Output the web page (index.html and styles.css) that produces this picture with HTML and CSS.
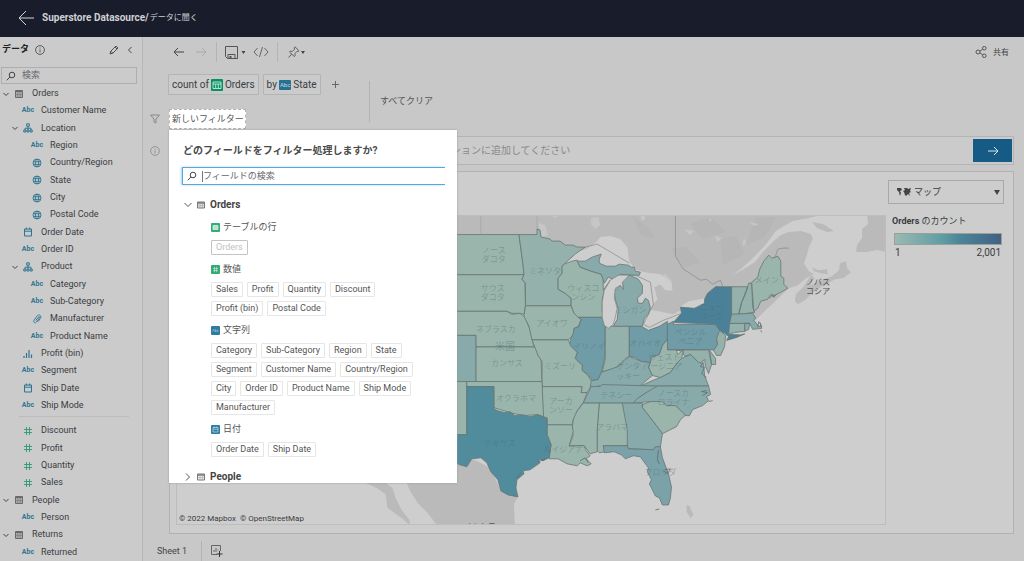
FILE: index.html
```html
<!DOCTYPE html>
<html lang="ja">
<head>
<meta charset="utf-8">
<meta name="viewport" content="width=device-width, initial-scale=1">
<title>データに聞く</title>
<link rel="stylesheet" href="styles.css">
</head>
<body>
<svg class="sprite" aria-hidden="true">
  <symbol id="table" viewBox="0 0 10 10"><path d="M1.500 1.500h7v7h-7z" fill="#aaa" stroke="#6a6a6a"/><path d="M1.500 2.500h7" stroke="#6a6a6a"/><path d="M3.800 3v5.500M6.200 3v5.500M1.500 5.500h7" stroke="#777" stroke-width=".6"/></symbol>
  <symbol id="hier" viewBox="0 0 10 10"><path d="M3.7.8h2.6v2.4H3.7zM.8 7h2.2v2H.8zM4 7h2v2H4zM7.2 7h2v2h-2zM5 3.2V7M2 7V5.2h6V7" fill="none" stroke="#2f7491"/></symbol>
  <symbol id="globe" viewBox="0 0 10 10"><path d="M1 5a4 4 0 1 0 8 0a4 4 0 1 0-8 0M1.3 3.7h7.4M1.3 6.4h7.4M5 1C2.8 3 2.8 7 5 9C7.2 7 7.2 3 5 1" fill="none" stroke="#2f7491" stroke-width=".9"/></symbol>
  <symbol id="date" viewBox="0 0 10 10"><path d="M1.5 2h7v7h-7zM1.5 4.2h7M3.3.5v2M6.7.5v2" fill="none" stroke="#2f7491"/></symbol>
  <symbol id="clip" viewBox="0 0 10 10"><path d="M3.800 6.500L6.300 3.200C7.200 2.300 8 3 7.400 4L4.500 8C3 9.700.8 8.300 2 6.300L5 2C6.800-.1 9.800 1.400 8.600 4L6 7.700" fill="none" stroke="#2f7491" stroke-width=".9"/></symbol>
  <symbol id="bars" viewBox="0 0 10 10"><path d="M1 9V7M3.500 9V4M6 9V1M8.500 9V5.500" stroke="#2f7491" stroke-width="1.2"/></symbol>
  <symbol id="hash" viewBox="0 0 10 10"><path d="M3.500 1v8M6.500 1v8M1 3.500h8M1 6.500h8" stroke="#2f9a6c" stroke-width=".9"/></symbol>
  <symbol id="down" viewBox="0 0 8 8"><path d="M1.500 3L4 5.500 6.500 3" fill="none" stroke="#444"/></symbol>
  <symbol id="search" viewBox="0 0 10 10"><path d="M3.200 4a2.800 2.800 0 1 0 5.600 0a2.800 2.800 0 1 0-5.600 0M4 6L.7 9.300" fill="none" stroke="#444"/></symbol>
  <symbol id="info" viewBox="0 0 10 10"><path d="M.6 5a4.400 4.400 0 1 0 8.800 0a4.400 4.400 0 1 0-8.800 0M5 4.300V7.500M5 2.500v1" fill="none" stroke="currentColor" stroke-width=".8"/></symbol>
  <symbol id="right" viewBox="0 0 12 10"><path d="M1 5h10M7 1l4 4-4 4" fill="none" stroke="currentColor"/></symbol>
  <symbol id="left" viewBox="0 0 12 10"><path d="M11 5H1M5 1L1 5l4 4" fill="none" stroke="currentColor"/></symbol>
</svg>

<header class="topbar">
  <button class="plain back" aria-label="戻る"><svg width="16" height="16" viewBox="0 0 16 16"><path d="M16 8H1M8 1L1 8l7 7" fill="none" stroke="#d5d6d9"/></svg></button>
  <h1><a href="#ds">Superstore Datasource/</a> <span>データに聞く</span></h1>
</header>

<div class="workspace">
  <aside class="sidebar">
    <div class="side-head">
      <h2>データ</h2>
      <svg class="i10 info" aria-hidden="true"><use href="#info"/></svg>
      <button class="plain edit" aria-label="編集"><svg width="10" height="10" viewBox="0 0 10 10"><path d="M1 9l.8-2.800L7 1l2 2-5.200 5.200zM6 2l2 2M1.800 6.200l2 2" fill="none" stroke="#444" stroke-width=".9"/></svg></button>
      <button class="plain" aria-label="閉じる"><svg width="6" height="8" viewBox="0 0 6 8"><path d="M4.500 1L1.500 4l3 3" fill="none" stroke="#444"/></svg></button>
    </div>
    <label class="side-search"><svg class="i10"><use href="#search"/></svg><input type="text" placeholder="検索" aria-label="検索"></label>
    <ul class="tree">
      <li class="l0"><svg class="tw"><use href="#down"/></svg><svg class="i10"><use href="#table"/></svg><span>Orders</span></li>
      <li class="l1"><i></i><b>Abc</b><span>Customer Name</span></li>
      <li class="l1"><svg class="tw"><use href="#down"/></svg><svg class="i10"><use href="#hier"/></svg><span>Location</span></li>
      <li class="l2"><i></i><b>Abc</b><span>Region</span></li>
      <li class="l2"><i></i><svg class="i10"><use href="#globe"/></svg><span>Country/Region</span></li>
      <li class="l2"><i></i><svg class="i10"><use href="#globe"/></svg><span>State</span></li>
      <li class="l2"><i></i><svg class="i10"><use href="#globe"/></svg><span>City</span></li>
      <li class="l2"><i></i><svg class="i10"><use href="#globe"/></svg><span>Postal Code</span></li>
      <li class="l1"><i></i><svg class="i10"><use href="#date"/></svg><span>Order Date</span></li>
      <li class="l1"><i></i><b>Abc</b><span>Order ID</span></li>
      <li class="l1"><svg class="tw"><use href="#down"/></svg><svg class="i10"><use href="#hier"/></svg><span>Product</span></li>
      <li class="l2"><i></i><b>Abc</b><span>Category</span></li>
      <li class="l2"><i></i><b>Abc</b><span>Sub-Category</span></li>
      <li class="l2"><i></i><svg class="i10"><use href="#clip"/></svg><span>Manufacturer</span></li>
      <li class="l2"><i></i><b>Abc</b><span>Product Name</span></li>
      <li class="l1"><i></i><svg class="i10"><use href="#bars"/></svg><span>Profit (bin)</span></li>
      <li class="l1"><i></i><b>Abc</b><span>Segment</span></li>
      <li class="l1"><i></i><svg class="i10"><use href="#date"/></svg><span>Ship Date</span></li>
      <li class="l1"><i></i><b>Abc</b><span>Ship Mode</span></li>
      <li class="rule" role="separator"></li>
      <li class="l1"><i></i><svg class="i10"><use href="#hash"/></svg><span>Discount</span></li>
      <li class="l1"><i></i><svg class="i10"><use href="#hash"/></svg><span>Profit</span></li>
      <li class="l1"><i></i><svg class="i10"><use href="#hash"/></svg><span>Quantity</span></li>
      <li class="l1"><i></i><svg class="i10"><use href="#hash"/></svg><span>Sales</span></li>
      <li class="l0"><svg class="tw"><use href="#down"/></svg><svg class="i10"><use href="#table"/></svg><span>People</span></li>
      <li class="l1"><i></i><b>Abc</b><span>Person</span></li>
      <li class="l0"><svg class="tw"><use href="#down"/></svg><svg class="i10"><use href="#table"/></svg><span>Returns</span></li>
      <li class="l1"><i></i><b>Abc</b><span>Returned</span></li>
    </ul>
  </aside>

  <main class="main">
    <div class="toolbar">
      <button class="plain" aria-label="元に戻す"><svg width="12" height="10"><use href="#left"/></svg></button>
      <button class="plain faded" aria-label="やり直し"><svg width="12" height="10"><use href="#right"/></svg></button>
      <span class="vr"></span>
      <button class="plain save" aria-label="保存"><svg width="20" height="13" viewBox="0 0 20 13"><path d="M.5.5h12v12H2.500l-2-2zM3 12.500V8.500h7v4" fill="none" stroke="#555"/><path d="M4.500 10h2v2.500h-2z" fill="#555"/><path d="M16.500 5h4l-2 3z" fill="#444"/></svg></button>
      <button class="plain code" aria-label="コード"><svg width="16" height="10" viewBox="0 0 16 10"><path d="M4.500 1L1 5l3.500 4M11.500 1L15 5l-3.500 4M9.500 0l-3 10" fill="none" stroke="#666"/></svg></button>
      <span class="vr"></span>
      <button class="plain pin" aria-label="ピン留め"><svg width="17" height="12" viewBox="0 0 17 12"><path d="M7 .8l4 4-.8.600-1.200-.1L7 7.500l.1 2.200-.8.800L1.500 6l.8-.8 2.200.1L6.500 3.300 6.300 1.700zM3.800 8L.5 11.500" fill="none" stroke="#555" stroke-width=".9"/><path d="M13 5h4l-2 3z" fill="#444"/></svg></button>
      <button class="plain share"><svg width="12" height="12" viewBox="0 0 12 12"><path d="M1 6a2 2 0 1 0 4 0a2 2 0 1 0-4 0M7.500 2.200a1.800 1.800 0 1 0 3.600 0a1.800 1.800 0 1 0-3.600 0M7.500 9.800a1.800 1.800 0 1 0 3.600 0a1.800 1.800 0 1 0-3.600 0M5 5l2.700-1.700M5 7l2.700 1.700" fill="none" stroke="#555"/></svg>共有</button>
    </div>

    <section class="query">
      <div class="phrases">
        <div class="pill-row">
          <button class="pill">count of <svg width="12" height="12" viewBox="0 0 12 12"><rect width="12" height="12" rx="1" fill="#079163"/><path d="M2 3h8v6.500H2zM2 5h8M4.700 5v4.500M7.300 5v4.500" fill="none" stroke="#cde8dd" stroke-width=".9"/></svg> Orders</button>
          <button class="pill">by <span class="abc-tag">Abc</span> State</button>
          <button class="plain plus" aria-label="追加"><svg width="7" height="7" viewBox="0 0 7 7"><path d="M0 3.500h7M3.500 0v7" stroke="#666"/></svg></button>
        </div>
        <div class="filter-row">
          <svg class="funnel" width="10" height="10" viewBox="0 0 10 10"><path d="M.5 1h9L6 5v4L4 8V5z" fill="none" stroke="#888"/></svg>
          <div class="filter-anchor">
            <button class="new-filter">新しいフィルター</button>
            <div class="popup" role="dialog" aria-labelledby="ptitle">
              <h2 id="ptitle">どのフィールドをフィルター処理しますか?</h2>
              <label class="field-search"><svg class="i10"><use href="#search"/></svg><span class="caret"></span><input type="text" placeholder="フィールドの検索" aria-label="フィールドの検索"></label>
              <h3><svg class="chev" viewBox="0 0 8 8"><path d="M.5 2L4 5.500 7.500 2" fill="none" stroke="#555"/></svg><svg class="tbl" viewBox="0 0 8 8"><path d="M.5 1h7v6h-7z" fill="#ddd" stroke="#777"/><path d="M.5 2h7" stroke="#777" stroke-width="1.5"/><path d="M.5 4.500h7M3 2v5M5.500 2v5" stroke="#aaa" stroke-width=".6"/></svg>Orders</h3>
              <div class="group">
                <h4><svg viewBox="0 0 9 9"><rect width="9" height="9" rx="1" fill="#36aa77"/><path d="M2 2.500h5v4H2z" fill="#b9e3d0" stroke="#dff3ea" stroke-width=".7"/></svg>テーブルの行</h4>
                <div class="chips"><button disabled>Orders</button></div>
                <h4><svg viewBox="0 0 9 9"><rect width="9" height="9" rx="1" fill="#36aa77"/><path d="M3.500 2v5M5.500 2v5M2 3.500h5M2 5.500h5" stroke="#cdebdd" stroke-width=".6"/></svg>数値</h4>
                <div class="chips"><button>Sales</button><button>Profit</button><button>Quantity</button><button>Discount</button><button>Profit (bin)</button><button>Postal Code</button></div>
                <h4><svg viewBox="0 0 9 9"><rect width="9" height="9" rx="1" fill="#2d7ca1"/><path d="M1.500 5.500l1-2 1 2M4.200 3v2.500h1V4.200h-1M7.500 4.200H6.200v1.300h1.300" fill="none" stroke="#b5d3e0" stroke-width=".5"/></svg>文字列</h4>
                <div class="chips"><button>Category</button><button>Sub-Category</button><button>Region</button><button>State</button><button>Segment</button><button>Customer Name</button><button>Country/Region</button><button>City</button><button>Order ID</button><button>Product Name</button><button>Ship Mode</button><button>Manufacturer</button></div>
                <h4><svg viewBox="0 0 9 9"><rect width="9" height="9" rx="1" fill="#2d7ca1"/><path d="M2 2.500h5v4.500H2zM2 4.200h5M3.200 1.500v1M5.800 1.500v1" fill="none" stroke="#c5dde7" stroke-width=".7"/></svg>日付</h4>
                <div class="chips"><button>Order Date</button><button>Ship Date</button></div>
              </div>
              <h3><svg class="chev" viewBox="0 0 8 8"><path d="M2 .5L5.500 4 2 7.500" fill="none" stroke="#555"/></svg><svg class="tbl" viewBox="0 0 8 8"><path d="M.5 1h7v6h-7z" fill="#eee" stroke="#777"/><path d="M.5 2h7" stroke="#777" stroke-width="1.500"/><path d="M.5 4.500h7M3 2v5M5.500 2v5" stroke="#aaa" stroke-width=".6"/></svg>People</h3>
            </div>
          </div>
        </div>
      </div>
      <button class="plain clear">すべてクリア</button>
    </section>

    <div class="ask-row">
      <svg class="i10 ask-info"><use href="#info"/></svg>
      <div class="ask">
        <input type="text" aria-label="質問" placeholder="フィールドまたは値を検索して、データのビジュアライゼーションに追加してください">
        <button aria-label="実行"><svg width="12" height="10"><use href="#right"/></svg></button>
      </div>
    </div>

    <section class="viz">
      <div class="map">
        <svg class="map-svg" viewBox="177 217 708 307" preserveAspectRatio="xMidYMid slice" role="img" aria-label="Orders のカウント マップ">
          <g fill="#bababa">
            <path d="M400 216H820L808 219L792 222L783 227L775 232L770 239L763 248L754 257L740 270L731 276L741 271L754 263L763 252L772 243L780 236L788 233L800 232L810 235L812 240L808 248L806 256L803 264L808 272L813 275L805 279L797 286L788 289L745 330L600 300L580 250L537 240H400z"/>
            <path d="M810 276L814 279L807 287L816 283L823 280L831 277L838 271L839 264L845 262L846 269L850 273L842 279L834 280L823 286L812 293L804 301L797 305L794 302L795 295L803 287z"/>
            <path d="M811 223L822 225L833 232L826 233L816 229zM811 268L817 271L826 270L827 275L820 274L813 272zM866 216H886V253L876 251L866 253L855 253L856 246L861 239L861 230L867 225z"/>
            <path d="M457 463L472 459L490 468L500 488L518 497L514 504L515 525H437L428 513L418 503L410 490L407 483H440zM366 483H386L393 488L396 498L402 510L410 520V525L402 518L388 508L386 494L377 488zM686 505L689 506L693 515L690 518L686 512z"/>
          </g>
          <g fill="#adadad" opacity=".3">
            <path d="M632 217L640 235L655 240L647 228zM690 225L710 218L725 233L702 240zM755 219L775 218L764 238L745 246z"/>
            <path d="M670 250L685 248L700 263L684 268zM720 240L735 237L744 255L722 266z"/>
          </g>
          <g fill="#c6c6c6">
            <path d="M538 224L545 226L548 236L542 238zM551 216L560 216L555 219zM591 219L598 218L600 226L595 230L591 226zM684 230L694 232L689 236zM714 237L721 239L717 243zM748 223L758 225L754 227zM664 274L671 281L670 292L664 289L658 284z"/>
            <path d="M640 216h4l1 4-4 2zM742 242l3-2 0 5-3 2zM709 219l2 1-2 4z"/>
          </g>
          <path d="M481 217V235M537 217V231" stroke="#a4a4a4" stroke-width=".7"/>
          <g fill="#cecece">
            <path d="M564 265L574 255L588 249L597 242L600 238L610 237L620 240L627 248L629 262L635 270L644 273L660 275L671 283L672 291L665 291L660 285L654 288L657 300L652 306L648 318L640 321L600 300L590 265z"/>
            <path d="M642 327L650 323L659 319L670 317L680 311L681 314L674 322L662 327L652 332L645 331zM680 307L688 302L699 300L705 299L703 305L693 309z"/>
          </g>
          <g class="states">
            <path d="M400 235.500H519L521 250L523 265L524 275.500H400z"/>
            <path d="M400 275.500H524L522 280L525 284L525.500 306L524 315L520 314L512 314L507 312H400z"/>
            <path d="M400 312H507L512 315L520 314L525 318L530 330L534 347.500H476V336H400z"/>
            <path d="M476 347.500H534L539 352L538 356L541 360L542 382H476z"/>
            <path class="b" d="M400 336H476V382H400z"/>
            <path d="M400 382H467V435H400z"/>
            <path class="a" d="M519 235.500H537V230L540 231L541 238L550 240L552 242L560 242L565 246L573 246L577 248L585 248L575 255L564 265L562 267L562 274L558 279V290L565 294L571 299V306.500H525.500V284L522 280L524 275.500L523 265z"/>
            <path d="M525.500 306.500H571L574 314L581 320L578 327L574 329L573 336L568 340.500H532L529 327L524 317z"/>
            <path d="M564 265L572 262L577 261L580 268L591 272L601 275L603 280L603 291L610 281L604 292L602 300L602 312L604 318H578L574 314L571 306V299L565 294L558 290V279L562 274V267z"/>
            <path class="b" d="M577 262L585 262L592 258L601 255L599 260L599 264L606 267L615 267L619 265L628 266L631 268L634 268L635 272L640 273L639 276H630L620 275L613 280L608 278L604 284L601 275L591 272L580 268z"/>
            <path class="b" d="M629 276L638 280L642 286L642 294L637 299L638 304L642 304L645 299L648 301L650 309L648 315L644 319L642 327H613L617 320L618 310L615 300L614 292L620 286L623 290L622 282z"/>
            <path class="c" d="M578 318H604L605 327V355L603 365L601 373L598 380L592 381L588 375L582 371L582 365L575 359L577 353L570 346L570 341L573 334L574 329L579 327L581 320z"/>
            <path class="a" d="M605 327H629V357L624 360L619 366L612 370L602 372L605 360z"/>
            <path class="c" d="M629 327H641L648 331L659 327L667 322V340L662 346L659 355L651 358L650 363L641 362L635 358L629 357z"/>
            <path class="c" d="M667 325L673 322L673 325H715L719 331L723 333L716 339L717 345L714 350.500H667z"/>
            <path class="ny" d="M673 323L681 314L680 308L694 309L704 304L704 300L707 294L715 287.500H731V315L729 324V335L740 335.500L744 334.500L736 338L726 341L728 337L723 333L719 331L715 325z"/>
            <path class="a" d="M731 287.500H747L745 294L741 303L738 315H731zM747 287.500L748 284L751 284L752 308L754 313L738 315L741 303zM729 324H744V332L734 333L728 335z"/>
            <path d="M751 283L757 278L759 270L763 262L768 256L771 259L777 257L780 262V277L783 279V285L787 289L780 293L772 297L770 295L767 300L760 302L757 309L753 312z"/>
            <path class="b" d="M731 315L752 314L755 319L753 321L758 327L761 327L759 323L761 329L752 330L749 324H729zM744 324H749L748 330L744 332z"/>
            <path class="a" d="M719 331L725 336L724 347L720 356L716 356L713 351L717 345L716 339zM676 350.500H708L711 365L708 374L705 367L704 360L699 364L690 355L684 357L682 352zM709 351L715 359L715 365H711z"/>
            <path d="M667 340V350.500H676L677 355L683 350.500L681 359L677 363L670 373L660 378L652 376L648 368L650 363L651 358L659 355L662 346z"/>
            <path class="b" d="M640 386.500L652 381L660 378L670 373L677 363L681 359L690 355L698 363L703 364L704 376L708 386.500z"/>
            <path class="b" d="M601 373L618 367L629 357L641 362L650 363L648 368L652 376L640 386L600 386L591 388L588 382L598 380z"/>
            <path class="b" d="M591 387H600L602 385L657 386.500L655 390L646 393L637 399L633 403.500H583z"/>
            <path class="b" d="M657 386.500H708L710 395L706 397L708 401L702 406L692 410L689 416H685L675 406H666L662 403L650 402L633 403.500L637 399L646 393z"/>
            <path d="M642 405L650 402L662 402L666 406H675L685 415.500L680 420L676 427L668 431L662 434L653 422L642 408z"/>
            <path class="b" d="M622 403.500H642V408L653 422L662 434L660 447L654 448V450L628 449L627 446L625 430z"/>
            <path d="M599 403.500H622L625 420L627 430V446H603L605 452L599 453L597 451L597 430z"/>
            <path d="M583 403.500H599L597 430V452L590 454L584 446H569L573 436L572 428L574 415L578 410z"/>
            <path class="c2" d="M603 446H627L628 449L653 450L655 447L660 447L662 458L668 474L671 487L670 498L668 505H662L659 498L655 496L649 484L651 480L647 472L648 468L640 457L633 456L625 459L621 455L614 452L604 453z"/>
            <path d="M547 425H572L573 432L569 446H584L586 451L590 456L586 459L591 464L587 466L580 463L577 466L567 464L558 459L549 459L551 445L547 435z"/>
            <path d="M542 387H582L581 393L587 393L583 403L577 411L573 420L572 425H547V418L543 417z"/>
            <path d="M532 340.500H568L571 347L577 353L575 359L582 366L582 371L588 376L591 382L590 388L587 393H581L582 387H542V362L538 356z"/>
            <path d="M467 382H542L543.500 417L537 415L523 416L510 413L494 408V387H467z"/>
            <path class="tx" d="M467 387H494V409L498 411L505 413L510 412L515 416L522 415L530 417L538 415L547 419V435L551 445L549 458L543 461L538 459L540 463L530 470L523 471L524 474L517 480L516 488L518 497L508 495L501 491L498 480L491 472L487 463L481 458L472 459L467 467L460 465L450 460L440 435H467z"/>
          </g>
          <g fill="#cecece" stroke="#777" stroke-width=".6">
            <path d="M629 276L618 276L610 281L604 291L602 303V318L604 326L608 329L613 325L615 318L617 309L614 299L615 289L620 286L623 290L622 283z"/>
          </g>
          <path d="M585 248L597 245L629 264M630 275L637 277L650 283L653 305L643 325L649 328L663 321L681 314M675 217V257L683 270L700 281L706 280L712 285L720 281L722 287M774 259L777 250L783 249L788 249" fill="none" stroke="#888" stroke-width=".7"/>
          <path d="M538 462l7-3M517 478l4-5M580 461l5-3 3 5M658 450l-1 10 2 4M664 470l6-1-3 5-4-3M706 391l-5 1 6 1-5 3M708 402l4-1M703 362l-3 5 4 1-3 6 5 4M769 299l3-4 1 3 3-3M757 328l1-6M761 333l-1-2M655 510l4-1" fill="none" stroke="#606b6b" stroke-width=".8"/>
          <g class="map-labels">
            <text x="494" y="254">ノース</text><text x="494" y="263">ダコタ</text><text x="493" y="292">サウス</text><text x="493" y="301">ダコタ</text><text x="545" y="275">ミネソタ</text><text x="583" y="292">ウィスコ</text><text x="583" y="301">ンシン</text><text x="630" y="314">ミシガン</text><text x="552" y="327">アイオワ</text><text x="496" y="333">ネブラスカ</text><text class="big" x="505" y="351">米国</text><text x="507" y="367">カンサス</text><text x="560" y="370">ミズーリ</text><text x="589" y="350">イリノイ</text><text x="645" y="347">オハイオ</text><text x="516" y="401">オクラホマ</text><text x="561" y="404">アーカ</text><text x="561" y="413">ンソー</text><text x="500" y="446">テキサス</text><text x="563" y="452">ルイジアナ</text><text x="612" y="430">アラバマ</text><text x="616" y="398">テネシー</text><text x="628" y="370">ケンタ</text><text x="628" y="379">ッキー</text><text x="664" y="361">ウェスト</text><text x="662" y="370">バージニア</text><text x="673" y="396">ノースカ</text><text x="673" y="405">ロライナ</text><text x="660" y="475">フロリダ</text><text x="690" y="336">ペンシル</text><text x="690" y="345">ベニア</text><text x="711" y="311">ニュー</text><text x="711" y="320">ヨーク</text><text x="766" y="284">メイン</text>
            <text class="dark" x="817" y="286">ノバス</text><text class="dark" x="817" y="295">コシア</text><text class="dark" x="480" y="529">メキシコ</text>
          </g>
        </svg>
        <p class="credits"><a href="#mapbox">© 2022 Mapbox</a><a href="#osm">© OpenStreetMap</a></p>
      </div>
      <div class="viz-side">
        <div class="select-wrap">
          <svg width="14" height="10" viewBox="0 0 14 10"><path d="M0 1h4l1 2-2 1 1 2-1 3-1-4L0 3zM7 1h3l1 1 3-1-1 3 1 1-2 1 1 3-2-2-2 2-1-1-1-3-1-1 2-1z" fill="#444"/></svg>
          <select aria-label="Viz タイプ"><option>マップ</option></select>
          <svg class="arrow" width="6" height="5" viewBox="0 0 6 5"><path d="M0 0h6L3 5z" fill="#444"/></svg>
        </div>
        <h2><b>Orders</b> のカウント</h2>
        <div class="ramp"></div>
        <div class="range"><span>1</span><span>2,001</span></div>
      </div>
    </section>

    <footer class="tabs">
      <button class="plain tab">Sheet 1</button>
      <button class="plain add" aria-label="シートを追加"><svg width="12" height="12" viewBox="0 0 12 12"><path d="M6 9.500H.5V.5h9V6M3 7V5M5 7V3M7 5.500V4.500" fill="none" stroke="#666"/><path d="M8.500 6v6M5.500 9h6" stroke="#333"/></svg></button>
    </footer>
  </main>
</div>
</body>
</html>
```
FILE: styles.css
```css
* { box-sizing: border-box; }
body {
  margin: 0;
  min-height: 100vh;
  display: flex;
  flex-direction: column;
  background: #c8c8c8;
  color: #3a3c3f;
  font: 9px/15px Roboto, "Noto Sans CJK JP", sans-serif;
}
h1, h2, h3, h4, p, ul { margin: 0; padding: 0; font-size: inherit; font-weight: inherit; }
svg { display: block; flex: none; }
button, input, select { font: inherit; color: inherit; margin: 0; }
button { padding: 0; cursor: pointer; }
input { min-width: 0; padding: 0; border: 0; outline: 0; background: transparent; }
a { color: inherit; text-decoration: none; }
.sprite { position: absolute; width: 0; height: 0; }
.i10 { width: 10px; height: 10px; }
.plain { display: flex; align-items: center; border: 0; background: none; color: #444; }

.topbar {
  display: flex;
  align-items: center;
  gap: 8px;
  height: 37px;
  padding: 0 18px 2px;
  background: #191d2b;
  color: #d0d1d4;
}
.topbar h1 { display: flex; gap: 1px; font-size: 8px; }
.topbar h1 a { font-weight: 700; font-size: 10px; }

.workspace { flex: 1; display: flex; min-height: 0; }

.sidebar {
  flex: none;
  width: 143px;
  display: flex;
  flex-direction: column;
  background: #cbcbcb;
  border-right: 1px solid #b8b8b8;
}
.side-head { display: flex; align-items: center; height: 25px; padding: 0 9px 0 2px; }
.side-head h2 { font-weight: 700; color: #222; }
.side-head .info { margin-left: 6px; }
.side-head .edit { margin: 0 8px 0 auto; }
.side-search {
  display: flex;
  align-items: center;
  gap: 6px;
  height: 17px;
  margin: 5px 5px 0 1px;
  padding: 0 4px;
  border: 1px solid #aeaeae;
}
.side-search input { flex: 1; }
input::placeholder { color: #66686b; opacity: 1; }
.tree { flex: 1; display: flex; flex-direction: column; list-style: none; margin-top: 1px; }
.tree li { flex: 1 1 17px; display: flex; align-items: center; line-height: 17px; white-space: nowrap; }
.tree .tw, .tree i { flex: none; width: 8px; height: 8px; margin-right: 4px; }
.tree .l0 { padding-left: 2px; }
.tree .l1 { padding-left: 11px; }
.tree .l2 { padding-left: 20px; }
.tree span { margin-left: 8px; }
.tree b { width: 14px; margin: 0 -2px; font-size: 7px; text-align: center; color: #2f7491; }
.tree .rule { flex: none; height: 6px; margin: 2px 13px 0 19px; border-top: 1px solid #bcbcbc; }

.main { flex: 1; min-width: 0; display: flex; flex-direction: column; }
.toolbar { display: flex; align-items: center; gap: 10px; height: 30px; padding: 0 15px 0 30px; }
.toolbar .faded { margin-right: -1px; color: #a9a9a9; }
.toolbar .vr { width: 1px; height: 20px; background: #b4b4b4; }
.toolbar .save { margin-left: -2px; }
.toolbar .code { margin: 0 -2px 0 -2px; }
.toolbar .share { margin-left: auto; gap: 6px; font-size: 8px; }

.query { display: flex; align-items: center; padding-top: 7px; }
.phrases { width: 226px; }
.pill-row { display: flex; gap: 4px; padding-left: 25px; }
.pill {
  display: flex;
  align-items: center;
  gap: 2px;
  height: 21px;
  padding: 0 3px;
  border: 1px solid #b4b4b4;
  border-radius: 1px;
  background: #cbcbcb;
  font-size: 10px;
  white-space: nowrap;
}
.abc-tag { padding: 0 1px; line-height: 10px; border-radius: 1px; background: #27708f; color: #c4d9e2; font-size: 6px; }
.plus { margin-left: 7px; }
.filter-row { display: flex; align-items: center; gap: 9px; margin-top: 14px; padding-left: 7px; }
.filter-anchor { position: relative; }
.new-filter {
  display: block;
  height: 20px;
  padding: 0 1px 0 2px;
  border: 1px dashed #b4b4b4;
  background: #fff;
  color: #555;
}
.clear { height: 41px; padding-left: 10px; border-left: 1px solid #b2b2b2; color: #555; }

.popup {
  position: absolute;
  z-index: 2;
  top: 21px;
  left: 0;
  width: 288px;
  height: 353px;
  padding: 12px 12px 0 13px;
  overflow: hidden;
  background: #fff;
  box-shadow: 0 0 2px #999;
  color: #555;
}
.popup h2 { line-height: 17px; margin-left: 1px; font-size: 10px; font-weight: 700; color: #4a4a4a; }
.field-search {
  display: flex;
  align-items: center;
  height: 18px;
  margin: 8px 0 12px;
  padding-left: 4px;
  border: 1px solid #55a8e2;
  border-right: 0;
  box-shadow: -1px 0 2px #a8d4f2;
}
.caret { width: 1px; height: 11px; margin-left: 5px; background: #777; }
.field-search input { flex: 1; }
.popup h3 { display: flex; align-items: center; height: 15px; margin: 0 0 8px 2px; font-size: 10px; font-weight: 700; color: #444; }
.popup h3 svg { width: 8px; height: 8px; }
.popup h3 .tbl { margin: 0 5px; }
.group { padding-left: 29px; margin-bottom: 12px; }
.group h4 { display: flex; align-items: center; gap: 3px; height: 15px; margin-bottom: 5px; }
.group h4 svg { width: 9px; height: 9px; }
.chips { display: flex; flex-wrap: wrap; gap: 4px; margin-bottom: 7px; max-width: 212px; }
.chips button { height: 15px; padding: 0 4px; border: 1px solid #e6e6e6; border-radius: 1px; background: #fff; line-height: 13px; }
.chips button:disabled { border-color: #c4c4c4; color: #c2c2c2; }

.ask-row { display: flex; align-items: center; gap: 9px; margin-top: 7px; padding: 0 10px 0 7px; }
.ask-info { color: #888; }
.ask { flex: 1; display: flex; height: 29px; padding: 2px 1px 2px 13px; border: 1px solid #b4b4b4; background: #cbcbcb; font-size: 10px; }
.ask input { flex: 1; }
.ask input::placeholder { color: #8a8a8a; }
.ask button { display: flex; align-items: center; justify-content: center; width: 39px; border: 0; background: #165a86; color: #dce6ed; }

.viz {
  flex: 1;
  display: grid;
  grid-template-columns: minmax(0, 1fr) 118px;
  margin: 6px 10px 0 26px;
  padding: 8px 9px 8px 6px;
  border: 1px solid #b2b2b2;
  background: #cdcdcd;
}
.map { position: relative; margin-top: 35px; border: 1px solid #bdbdbd; background: #cecece; overflow: hidden; }
.map-svg { position: absolute; inset: 0; width: 100%; height: 100%; }
.states path { fill: #9ab5ac; stroke: #687573; stroke-width: 0.8; stroke-linejoin: round; }
.states .a { fill: #94b1ab; }
.states .b { fill: #88aaab; }
.states .c { fill: #6f9ca6; }
.states .c2 { fill: #7aa2a8; }
.states .tx { fill: #508c9c; }
.states .ny { fill: #4a8199; }
.map-labels { font-size: 8px; text-anchor: middle; fill: #4c6a6c; fill-opacity: 0.4; }
.map-labels .big { font-size: 10px; }
.map-labels .dark { fill: #555; fill-opacity: 1; }
.credits { position: absolute; left: 2px; bottom: -2px; display: flex; gap: 4px; font-size: 8px; }

.viz-side { padding-left: 2px; }
.select-wrap { display: flex; align-items: center; gap: 3px; height: 24px; padding: 0 3px 0 8px; border: 1px solid #a9a9a9; }
.select-wrap select {
  flex: 1;
  min-width: 0;
  height: 100%;
  padding: 0;
  border: 0;
  appearance: none;
  background: none;
}
.viz-side h2 { margin: 10px 0 4px 4px; }
.ramp { height: 12px; margin: 0 2px 0 6px; border: 1px solid #9a9f98; background: linear-gradient(90deg, #9ab9b0, #5f9ca5 45%, #4c8699 60%, #426183); }
.range { display: flex; justify-content: space-between; margin: 0 3px 0 7px; font-size: 10px; }

.tabs { display: flex; align-items: stretch; height: 20px; margin-top: 7px; }
.tab { padding: 0 14px; border-right: 1px solid #b2b2b2; }
.add { padding-left: 9px; }
```
